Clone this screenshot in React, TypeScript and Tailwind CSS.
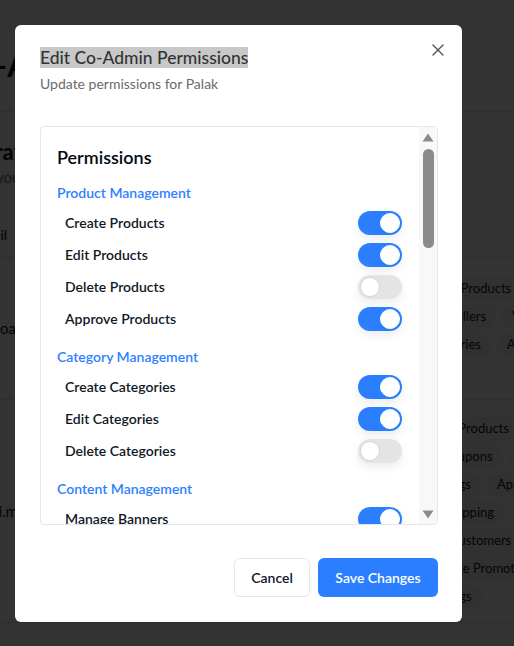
import React from "react";
import { X } from "lucide-react";

type Perm = { label: string; on: boolean };
type Section = { title: string; perms: Perm[] };

const sections: Section[] = [
  {
    title: "Product Management",
    perms: [
      { label: "Create Products", on: true },
      { label: "Edit Products", on: true },
      { label: "Delete Products", on: false },
      { label: "Approve Products", on: true },
    ],
  },
  {
    title: "Category Management",
    perms: [
      { label: "Create Categories", on: true },
      { label: "Edit Categories", on: true },
      { label: "Delete Categories", on: false },
    ],
  },
  {
    title: "Content Management",
    perms: [
      { label: "Manage Banners", on: true },
      { label: "Manage Pages", on: false },
    ],
  },
];

function Toggle({ on }: { on: boolean }) {
  return (
    <div
      className={
        on
          ? "w-11 h-6 rounded-full p-[2px] flex justify-end bg-blue-500 shadow-[0_4px_10px_rgba(0,0,0,0.08)]"
          : "w-11 h-6 rounded-full p-[2px] flex justify-start bg-[#e4e4e4] shadow-[0_4px_10px_rgba(0,0,0,0.08)]"
      }
    >
      <div
        className={
          on
            ? "w-5 h-5 rounded-full bg-white border border-white"
            : "w-5 h-5 rounded-full bg-white border border-gray-300"
        }
      />
    </div>
  );
}

function Chip({ text }: { text: string }) {
  return (
    <span className="h-6 px-[10px] rounded-full bg-gray-100 text-[13px] flex items-center whitespace-nowrap">
      {text}
    </span>
  );
}

// page behind the dialog, only its edges show
function Backdrop() {
  return (
    <div className="min-h-screen bg-white text-gray-900 overflow-hidden">
      <div className="w-[760px] -ml-[38px]">
        <div className="h-[112px] pt-[47px] border-b border-gray-200">
          <h1 className="-ml-[6px] text-[32px] leading-9 font-bold whitespace-nowrap">Co-Admin Management</h1>
        </div>
        <div className="pt-[25px] -ml-[55px]">
          <h2 className="text-[22px] leading-[30px] font-bold whitespace-nowrap">Administrators</h2>
        </div>
        <div className="-ml-[22px] text-[15px] leading-5 text-gray-500 whitespace-nowrap">
          Manage your co-admins and their permissions
        </div>
        <div className="h-[71px] pt-[38px] border-b border-gray-200 flex text-sm font-medium">
          <div className="w-[378px] pl-[12px]">Email</div>
          <div>Permissions</div>
        </div>
        <div className="h-[142px] border-b border-gray-200 flex">
          <div className="w-[378px] self-center text-[15px] whitespace-nowrap">palak.oaf@gmail.com</div>
          <div className="pt-[19px] flex flex-col gap-1">
            <div className="flex gap-[6px] ml-[85px]">
              <Chip text="Edit Products" />
            </div>
            <div className="flex gap-[6px] ml-[50px]">
              <Chip text="Manage Sellers" />
              <Chip text="View Orders" />
            </div>
            <div className="flex gap-[6px] ml-[70px]">
              <Chip text="Categories" />
              <Chip text="Approve Sellers" />
            </div>
          </div>
        </div>
        <div className="h-[223px] border-b border-gray-200 flex">
          <div className="w-[378px] self-center pl-[16px] text-[15px] whitespace-nowrap">ravi.mehta@gmail.com</div>
          <div className="pt-[17px] flex flex-col gap-1">
            <div className="flex gap-[6px] ml-[67px]">
              <Chip text="Delete Products" />
            </div>
            <div className="flex gap-[6px] ml-[43px]">
              <Chip text="Manage Coupons" />
              <Chip text="Orders" />
            </div>
            <div className="flex gap-[6px] ml-[29px]">
              <Chip text="Manage Listings" />
              <Chip text="Approve Products" />
            </div>
            <div className="flex gap-[6px] ml-[95px]">
              <Chip text="Shipping" />
              <Chip text="Payments" />
            </div>
            <div className="flex gap-[6px] ml-[51px]">
              <Chip text="Manage Customers" />
            </div>
            <div className="flex gap-[6px] ml-[74px]">
              <Chip text="Manage Promotions" />
            </div>
            <div className="flex gap-[6px] ml-[76px]">
              <Chip text="Settings" />
            </div>
          </div>
        </div>
      </div>
    </div>
  );
}

export default function App() {
  return (
    <div className="relative font-['Lato','Liberation_Sans',sans-serif]">
      <Backdrop />
      <div className="fixed inset-0 bg-black/80 flex items-start pt-[25px]">
        <div className="relative ml-[15px] w-[447px] h-[597px] bg-white rounded-md pl-[25px] pr-[24px] pt-[19px] flex flex-col">
          <button className="absolute right-[14px] top-[15px] text-[#555]">
            <X size={20} strokeWidth={1.6} />
          </button>

          <h2 className="text-[17.5px] leading-7 font-medium text-[#333]">
            <span className="bg-[#c8c8c8]">Edit Co-Admin Permissions</span>
          </h2>
          <p className="mt-[2px] text-sm leading-5 text-[#6b6b6b]">Update permissions for Palak</p>

          <div className="mt-8 h-[399px] border border-gray-200 rounded flex">
            <div className="flex-1 overflow-hidden pl-4 pr-[17px] pt-4">
              <h3 className="text-lg leading-7 font-semibold text-gray-950 mb-3">Permissions</h3>
              {sections.map((s) => (
                <div key={s.title} className="mb-4">
                  <div className="text-sm leading-5 font-semibold text-blue-500 mb-2">{s.title}</div>
                  <div className="space-y-2">
                    {s.perms.map((p) => (
                      <div key={p.label} className="flex items-center justify-between pl-2 h-6">
                        <span className="text-sm font-semibold text-gray-900">{p.label}</span>
                        <Toggle on={p.on} />
                      </div>
                    ))}
                  </div>
                </div>
              ))}
            </div>
            <div className="w-[18px] bg-[#f8f8f8] flex flex-col items-center pt-[6px] pb-[5px]">
              <svg width="12" height="9" viewBox="0 0 12 9">
                <path d="M6 0.5 L11.5 8.5 L0.5 8.5 Z" fill="#8b8b8b" />
              </svg>
              <div className="mt-[7px] w-[11px] h-[99px] rounded-full bg-[#8b8b8b]" />
              <div className="flex-1" />
              <svg width="12" height="9" viewBox="0 0 12 9">
                <path d="M0.5 0.5 L11.5 0.5 L6 8.5 Z" fill="#8b8b8b" />
              </svg>
            </div>
          </div>

          <div className="mt-[33px] flex justify-end gap-2">
            <button className="h-[39px] w-[76px] flex items-center justify-center rounded-md border border-gray-200 bg-white text-sm font-semibold text-gray-900">
              Cancel
            </button>
            <button className="h-[39px] w-[120px] flex items-center justify-center rounded-md bg-blue-500 text-sm font-semibold text-white">
              Save Changes
            </button>
          </div>
        </div>
      </div>
    </div>
  );
}
